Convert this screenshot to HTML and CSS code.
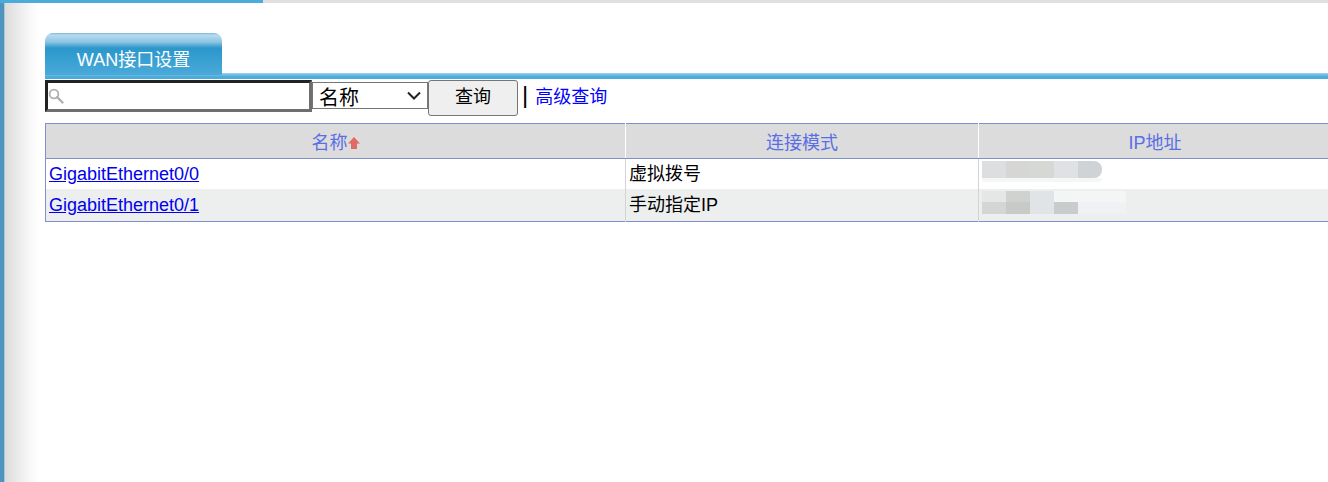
FILE: index.html
```html
<!DOCTYPE html>
<html lang="zh-CN">
<head>
<meta charset="utf-8">
<title>WAN接口设置</title>
<link rel="stylesheet" href="styles.css">
</head>
<body>
<div class="progress"><div class="progress-fill"></div></div>
<div class="frame">
  <div class="rail"></div>
  <main class="main">
    <div class="tabs"><div class="tab">WAN接口设置</div></div>
    <div class="tab-line"></div>
    <form class="search">
      <span class="search-box">
        <svg class="search-icon" width="16" height="16" viewBox="0 0 16 16"><circle cx="6" cy="6" r="4.4" fill="none" stroke="#b0b0b0" stroke-width="1.8"/><path d="M9.2 9.2 14.5 14.5" stroke="#b0b0b0" stroke-width="2.4" stroke-linecap="round"/></svg>
        <input class="search-input" type="text">
      </span>
      <span class="select-wrap">
        <select class="search-field"><option>名称</option></select>
        <svg class="select-arrow" width="14" height="9" viewBox="0 0 14 9"><path d="M1 1.5 7 7.5 13 1.5" fill="none" stroke="#222" stroke-width="2"/></svg>
      </span>
      <button class="search-btn" type="button">查询</button>
      <span class="sep">|</span>
      <a class="adv" href="#">高级查询</a>
    </form>
    <table class="grid">
      <colgroup><col class="c1"><col class="c2"><col class="c3"></colgroup>
      <thead>
        <tr>
          <th>名称<svg class="sort" width="12" height="12" viewBox="0 0 12 12"><path d="M6 0 12 6.5H9V12H3V6.5H0Z" fill="#e06a66"/></svg></th>
          <th>连接模式</th>
          <th>IP地址</th>
        </tr>
      </thead>
      <tbody>
        <tr class="r1">
          <td><a href="#">GigabitEthernet0/0</a></td>
          <td>虚拟拨号</td>
          <td class="ipcell"><div class="mosaic m1"><i class="a"></i><i class="b"></i><i class="c"></i><i class="d"></i><i class="e"></i></div><div class="smear"></div></td>
        </tr>
        <tr class="r2">
          <td><a href="#">GigabitEthernet0/1</a></td>
          <td>手动指定IP</td>
          <td class="ipcell">
            <div class="mosaic m2"><i class="f"></i><i class="g"></i><i class="h"></i><i class="k"></i><i class="k"></i><i class="k"></i></div>
            <div class="mosaic m3"><i class="l"></i><i class="m"></i><i class="h"></i><i class="n"></i><i class="o"></i><i class="o"></i></div>
          </td>
        </tr>
      </tbody>
    </table>
  </main>
</div>
</body>
</html>
```
FILE: styles.css
```css
html, body { margin: 0; padding: 0; height: 100%; overflow: hidden; background: #fff; }
body { font-family: "Liberation Sans", "Noto Sans CJK SC", sans-serif; font-size: 18px; color: #000; }
.progress { height: 3px; background: #e0e0e0; }
.progress-fill { width: 263px; height: 3px; background: #4bacdb; }
.frame { display: flex; height: 479px; }
.rail { width: 40px; flex: none; background: linear-gradient(to right, #4f93bf 0, #4f93bf 4px, #7fb0cf 4px, #dcdcdc 5px, #e4e4e4 12px, #f8f8f8 30px, #fff 40px); }
.main { flex: 1; min-width: 0; padding: 30px 0 0 5px; overflow: hidden; }
.tabs { height: 40px; display: flex; }
.tab { width: 177px; height: 42px; box-sizing: border-box; padding-top: 16px; text-align: center; color: #fff; font-size: 18px; line-height: 22px; border-radius: 8px 8px 0 0; background: linear-gradient(to bottom, #7fb6d6 0, #b8dcf0 2px, #8cc5e3 9px, #2b97cb 15px, #4aaad9 42px); position: relative; z-index: 1; }
.tab-line { height: 6px; background: linear-gradient(to bottom, #a3d1e8, #4bacdb 60%); }
.search { display: flex; align-items: flex-start; height: 43px; margin-top: 1px; }
.search-box { position: relative; display: block; width: 267px; height: 32px; }
.search-icon { position: absolute; left: 3px; top: 8px; }
.search-input { display: block; width: 267px; height: 32px; box-sizing: border-box; padding: 0 0 0 20px; margin: 0; background: transparent; border-style: solid; border-width: 3px; border-color: #222 #6e6e6e #6e6e6e #222; outline: none; }
.select-wrap { position: relative; display: block; width: 116px; height: 27px; margin-top: 2px; }
.select-arrow { position: absolute; right: 7px; top: 9px; pointer-events: none; }
.search-field { display: block; width: 116px; height: 27px; margin: 0; box-sizing: border-box; font-family: inherit; font-size: 20px; line-height: 25px; padding: 3px 0 0 6px; background: #fff; border: 1px solid #767676; border-radius: 0; appearance: none; -webkit-appearance: none; color: #000; }
.search-btn { width: 90px; height: 36px; margin: 0; padding: 0 0 6px; box-sizing: border-box; font-family: inherit; font-size: 18px; background: #efefef; border: 1px solid #767676; border-radius: 3px; color: #000; }
.sep { font-size: 24px; line-height: 30px; margin-left: 4px; }
.adv { font-size: 18px; line-height: 34px; margin-left: 7px; color: #00f; text-decoration: none; }
.grid { width: 1286px; table-layout: fixed; border-collapse: collapse; border: 1px solid #7f8fcf; }
.c1 { width: 580px; } .c2 { width: 353px; } .c3 { width: 353px; }
.grid th { height: 34px; padding: 0; background: #dcdcdc; color: #5a6ee6; font-size: 18px; font-weight: 400; text-align: center; border-bottom: 1px solid #7f8fcf; border-left: 1px solid #fff; }
.grid th:first-child { border-left: 0; }
.sort { vertical-align: 0; }
.grid td { padding: 0 0 0 3px; font-size: 18px; line-height: 20px; border-left: 1px solid #d4d4d4; }
.grid td:first-child { border-left: 0; }
.r1 td { height: 29px; background: #fff; }
.r2 td { height: 31px; background: #edefef; }
.grid a { color: #00e; }
.grid td.ipcell { padding: 1px 0 0 3px; vertical-align: top; }
.mosaic { display: flex; }
.mosaic i { display: block; width: 24px; height: 100%; }
.m1 { height: 17px; margin-top: 1px; width: 120px; }
.m1 .e { border-radius: 0 8px 8px 0; }
.smear { width: 120px; height: 4px; background: #f5f6f6; border-radius: 0 0 8px 8px; }
.m2 { height: 11px; margin-top: 1px; }
.m3 { height: 12px; }
.a { background: #dcdee0; } .b { background: #d6d6d4; } .c { background: #d6d8d6; } .d { background: #dfe1e4; } .e { background: #cfd3d5; }
.f { background: #e5e7e6; } .g { background: #d0d2d0; } .h { background: #e0e4e6; } .k { background: #f4f5f5; }
.l { background: #d4d6d5; } .m { background: #c8cac8; } .n { background: #c8cccd; } .o { background: #f0f1f4; }
```
